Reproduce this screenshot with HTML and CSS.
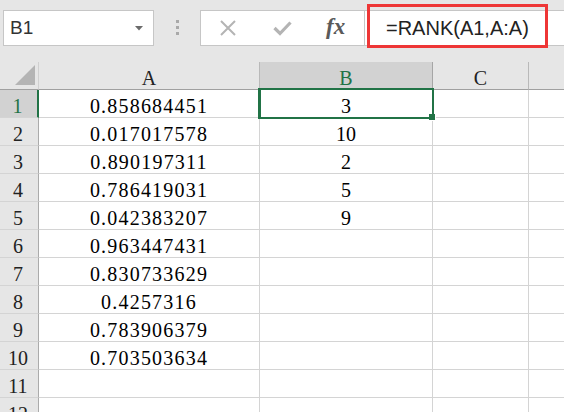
FILE: index.html
```html
<!DOCTYPE html>
<html>
<head>
<meta charset="utf-8">
<link rel="stylesheet" href="styles.css">
</head>
<body>
<div class="toolbar">
  <div class="namebox">
    <span class="name">B1</span>
    <svg class="arrow" width="8" height="5" viewBox="0 0 8 5"><polygon points="0,0 8,0 4,4.5" fill="#6b6b6b"/></svg>
  </div>
  <div class="grip"><i></i><i></i><i></i></div>
  <div class="iconbox">
    <svg class="ic" width="20" height="16" viewBox="0 0 20 16"><path d="M3 1 L17 15 M17 1 L3 15" stroke="#b4b4b4" stroke-width="2" fill="none"/></svg>
    <svg class="ic" width="19" height="16" viewBox="0 0 19 16"><path d="M1.5 8 L7 13.5 L17.5 2.5" stroke="#b4b4b4" stroke-width="3.2" fill="none"/></svg>
    <span class="fx">fx</span>
  </div>
  <div class="formula">=RANK(A1,A:A)</div>
  <div class="redbox"></div>
</div>
<div class="grid">
  <div class="hd corner"><svg width="20" height="20" viewBox="0 0 20 20"><polygon points="20,0 20,20 0,20" fill="#b4b4b4"/></svg></div>
  <div class="hd col">A</div>
  <div class="hd col sel">B</div>
  <div class="hd col">C</div>
  <div class="hd col last"></div>

  <div class="rn sel">1</div><div class="c a">0.858684451</div><div class="c b active">3<div class="selbox"><div class="handle"></div></div></div><div class="c"></div><div class="c last"></div>
  <div class="rn">2</div><div class="c a">0.017017578</div><div class="c b">10</div><div class="c"></div><div class="c last"></div>
  <div class="rn">3</div><div class="c a">0.890197311</div><div class="c b">2</div><div class="c"></div><div class="c last"></div>
  <div class="rn">4</div><div class="c a">0.786419031</div><div class="c b">5</div><div class="c"></div><div class="c last"></div>
  <div class="rn">5</div><div class="c a">0.042383207</div><div class="c b">9</div><div class="c"></div><div class="c last"></div>
  <div class="rn">6</div><div class="c a">0.963447431</div><div class="c b"></div><div class="c"></div><div class="c last"></div>
  <div class="rn">7</div><div class="c a">0.830733629</div><div class="c b"></div><div class="c"></div><div class="c last"></div>
  <div class="rn">8</div><div class="c a">0.4257316</div><div class="c b"></div><div class="c"></div><div class="c last"></div>
  <div class="rn">9</div><div class="c a">0.783906379</div><div class="c b"></div><div class="c"></div><div class="c last"></div>
  <div class="rn">10</div><div class="c a">0.703503634</div><div class="c b"></div><div class="c"></div><div class="c last"></div>
  <div class="rn">11</div><div class="c a"></div><div class="c b"></div><div class="c"></div><div class="c last"></div>
  <div class="rn">12</div><div class="c a"></div><div class="c b"></div><div class="c"></div><div class="c last"></div>
</div>
</body>
</html>
```
FILE: styles.css
```css
* { box-sizing: border-box; }
html, body { margin: 0; padding: 0; }
body {
  width: 564px;
  height: 412px;
  overflow: hidden;
  background: #e6e6e6;
}
.toolbar {
  position: relative;
  height: 62px;
  display: flex;
  align-items: flex-start;
  padding: 10px 0 0 3px;
}
.namebox {
  width: 151px;
  height: 36px;
  background: #fff;
  border: 1px solid #c6c6c6;
  display: flex;
  align-items: center;
  justify-content: space-between;
  padding: 0 10px 0 6px;
}
.name {
  font-family: "Liberation Sans", Arial, sans-serif;
  font-size: 19px;
  line-height: 34px;
  color: #333;
}
.arrow { margin-top: 1px; }
.grip {
  width: 46px;
  height: 36px;
  display: flex;
  flex-direction: column;
  align-items: center;
  justify-content: flex-start;
  padding-top: 10px;
  gap: 3px;
}
.grip i {
  display: block;
  width: 3px;
  height: 3px;
  background: #a9a9a9;
}
.iconbox {
  width: 165px;
  height: 36px;
  background: #fff;
  border: 1px solid #c6c6c6;
  display: flex;
  align-items: center;
  padding-left: 17px;
  gap: 35px;
}
.ic { display: block; }
.fx {
  font-family: "Liberation Serif", "Times New Roman", serif;
  font-style: italic;
  font-weight: bold;
  font-size: 23px;
  color: #5a5a5a;
  margin-left: -1px;
  margin-top: -2px;
}
.formula {
  flex: 1;
  height: 36px;
  margin-left: -1px;
  background: #fff;
  border: 1px solid #c6c6c6;
  border-right: none;
  padding-left: 21px;
  font-family: "Liberation Sans", Arial, sans-serif;
  font-size: 20px;
  line-height: 34px;
  color: #222;
}
.redbox {
  position: absolute;
  left: 367px;
  top: 4px;
  width: 181px;
  height: 44px;
  border: 3px solid #ee3636;
}
.grid {
  display: grid;
  grid-template-columns: 39px 221px 173px 96px 1fr;
  grid-auto-rows: 28px;
  font-family: "Liberation Serif", "Times New Roman", serif;
  font-size: 20px;
  line-height: 20px;
  color: #000;
}
.hd {
  background: #e6e6e6;
  border-right: 1px solid #b9b9b9;
  border-bottom: 1px solid #a0a0a0;
  text-align: center;
  padding-top: 6px;
  color: #222;
}
.hd.sel {
  background: #d2d2d2;
  color: #217346;
  border-right-color: #a6a6a6;
}
.hd.last { border-right: none; }
.corner {
  display: flex;
  justify-content: flex-end;
  align-items: flex-end;
  padding: 0 3px 4px 0;
  border-right-color: #d0d0d0;
}
.corner svg { display: block; }
.rn {
  background: #e6e6e6;
  border-right: 1px solid #ababab;
  border-bottom: 1px solid #d4d4d4;
  text-align: center;
  padding-top: 6px;
  padding-right: 2px;
  color: #222;
}
.rn.sel {
  background: #d2d2d2;
  color: #217346;
  border-right: 2px solid #217346;
}
.c {
  background: #fff;
  border-right: 1px solid #d4d4d4;
  border-bottom: 1px solid #d4d4d4;
  text-align: center;
  padding-top: 6px;
  white-space: nowrap;
}
.c.last { border-right: none; }
.c.a { letter-spacing: 1.2px; }
.c.active { position: relative; }
.selbox {
  position: absolute;
  left: -2px;
  top: -2px;
  width: 176px;
  height: 31px;
  border: 2px solid #217346;
  border-top-width: 2px;
  border-left-width: 3px;
}
.handle {
  position: absolute;
  right: -4px;
  bottom: -4px;
  width: 7px;
  height: 7px;
  background: #217346;
  border: 1px solid #fff;
  border-top: none;
  border-left: none;
  box-sizing: content-box;
  width: 6px;
  height: 6px;
}
```
